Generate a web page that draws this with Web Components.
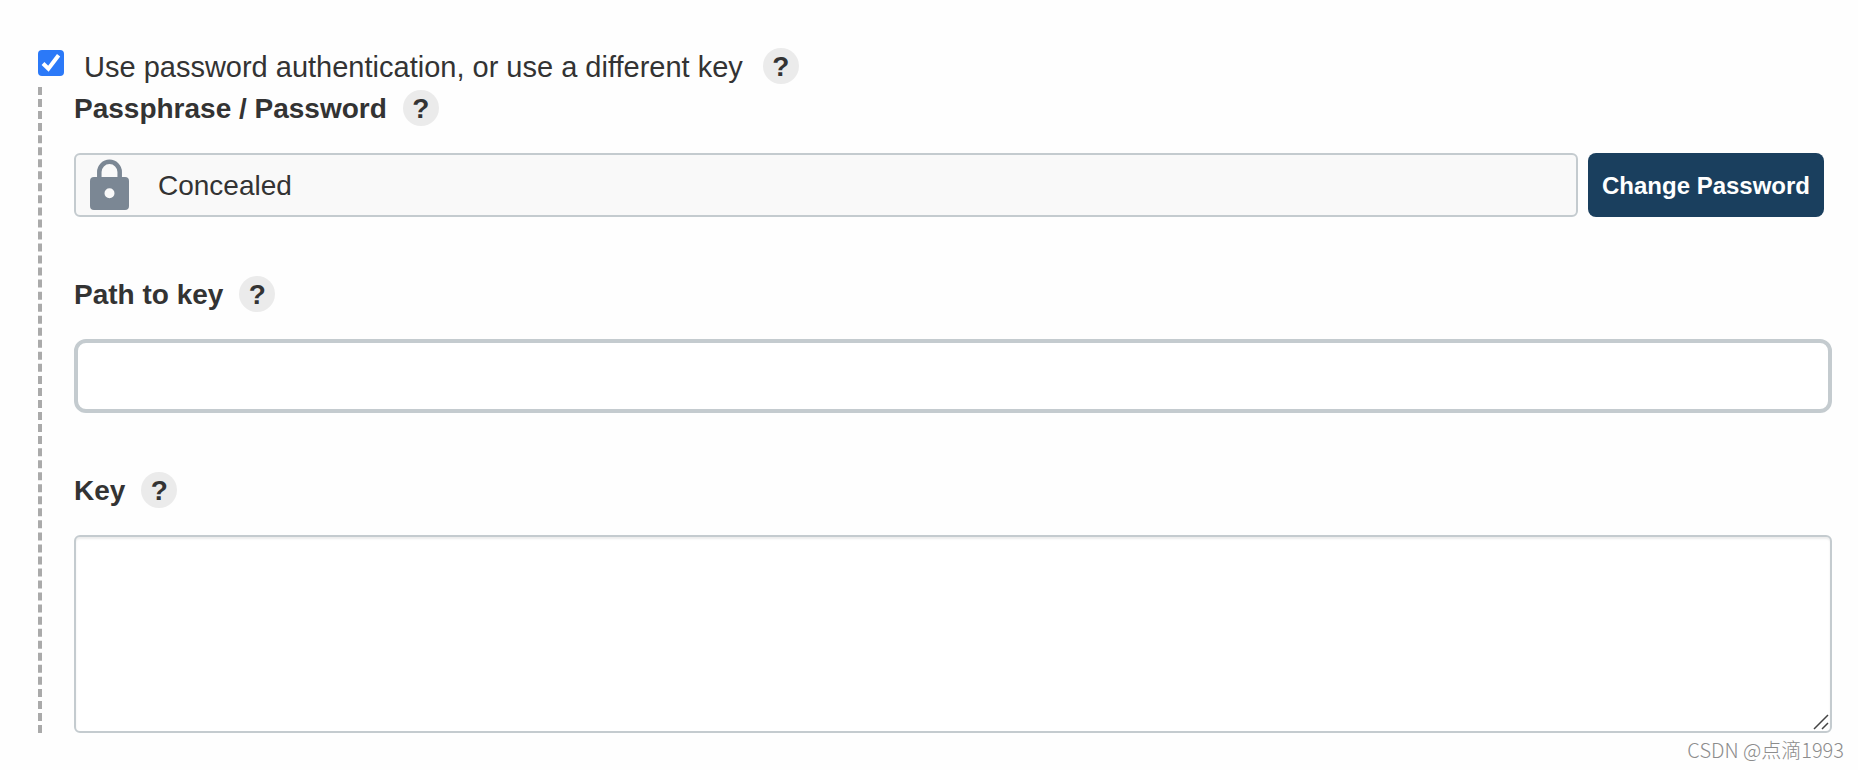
<!DOCTYPE html>
<html lang="en">
<head>
<meta charset="utf-8">
<meta name="viewport" content="width=device-width, initial-scale=1">
<title>Credentials</title>
<style>
  body { margin: 0; background: #fefefe; color: #333; font: 28px/38px "Liberation Sans", Arial, sans-serif; }
</style>
</head>
<body>
<credentials-form></credentials-form>
<script>
const define = (name, html, ready) => {
  const template = document.createElement('template');
  template.innerHTML = html;
  customElements.define(name, class extends HTMLElement {
    constructor() {
      super();
      this.attachShadow({ mode: 'open' }).append(template.content.cloneNode(true));
    }
    connectedCallback() { if (ready) ready(this, this.shadowRoot); }
  });
};

define('help-button', `
  <style>
    :host { display: block; flex: none; }
    button { display: block; width: 36px; height: 36px; margin: 0; padding: 0; border: 0; border-radius: 50%;
      background: #ebebeb; color: #333; font: bold 28px/38px "Liberation Sans", Arial, sans-serif; text-align: center; cursor: pointer; }
  </style>
  <button type="button">?</button>`,
  (host, root) => { root.querySelector('button').title = 'Help for ' + host.getAttribute('topic'); });

define('option-toggle', `
  <style>
    :host { display: flex; align-items: flex-start; height: 36px; }
    input { appearance: none; flex: none; width: 26px; height: 26px; margin: 2px 20px 0 0; border: 2px solid #767676; border-radius: 4px; background: #fff; }
    input:checked { border: 0; background: #2b79f8; }
    .box { position: relative; display: flex; }
    .box svg { position: absolute; left: 0; top: 2px; width: 26px; height: 26px; pointer-events: none; }
    input:not(:checked) + svg { display: none; }
    label { margin-right: 20px; font-size: 29px; }
  </style>
  <span class="box"><input type="checkbox" id="toggle" checked>
    <svg viewBox="0 0 26 26" aria-hidden="true"><path d="M5 13.5 10.4 18.8 20.6 5.2" fill="none" stroke="#fff" stroke-width="4"/></svg></span>
  <label for="toggle"><slot></slot></label>
  <help-button topic="authentication"></help-button>`);

const fieldStyle = `
    :host { display: block; }
    header { display: flex; gap: 16px; height: 36px; margin-bottom: 27px; font-weight: bold; }
    input, textarea { display: block; box-sizing: border-box; width: 100%; margin: 0; color: #333;
      font: 28px/38px "Liberation Sans", Arial, sans-serif; outline: 0; }`;

define('concealed-field', `
  <style>${fieldStyle}
    .row { display: flex; gap: 10px; padding-right: 8px; }
    .box { flex: 1; display: flex; align-items: center; box-sizing: border-box; height: 64px; padding-left: 14px;
      border: 2px solid #c4cbcf; border-radius: 6px; background: #f9f9f9; }
    svg { flex: none; width: 39px; height: 52px; margin-right: 29px; }
    input { flex: 1; min-width: 0; padding: 2px 0 0; border: 0; background: none; }
    button { flex: none; width: 236px; height: 64px; padding: 2px 0 0; border: 0; border-radius: 8px; background: #1a3f5e; color: #fff;
      font: bold 24px/32px "Liberation Sans", Arial, sans-serif; cursor: pointer; }
  </style>
  <header><label for="secret"><slot></slot></label><help-button topic="password"></help-button></header>
  <div class="row">
    <div class="box">
      <svg viewBox="0 0 39 52" aria-hidden="true">
        <path d="M9.300 21V13a10.200 10.200 0 0 1 20.400 0V21" fill="none" stroke="#7b8794" stroke-width="4.500"/>
        <path fill="#7b8794" fill-rule="evenodd" d="M4 18H35a4 4 0 0 1 4 4V47a4 4 0 0 1-4 4H4a4 4 0 0 1-4-4V22a4 4 0 0 1 4-4ZM19.500 29.200a5 5 0 1 0 0 10a5 5 0 1 0 0-10Z"/>
      </svg>
      <input id="secret" type="text" value="Concealed" readonly>
    </div>
    <button type="button">Change Password</button>
  </div>`);

define('text-field', `
  <style>${fieldStyle}
    input { height: 74px; padding: 0 14px; border: 4px solid #c4cbcf; border-radius: 12px; background: #fff; }
  </style>
  <header><label for="path"><slot></slot></label><help-button topic="path"></help-button></header>
  <input id="path" type="text">`);

define('key-area', `
  <style>${fieldStyle}
    .area { position: relative; }
    textarea { height: 198px; padding: 10px 14px; border: 2px solid #c4cbcf; border-radius: 6px; background: #fff;
      box-shadow: inset 0 2px 2px #ededed; resize: vertical; }
    textarea::-webkit-resizer { background: transparent; }
    svg { position: absolute; right: 3px; bottom: 3px; width: 16px; height: 16px; pointer-events: none; }
  </style>
  <header><label for="key"><slot></slot></label><help-button topic="key"></help-button></header>
  <div class="area"><textarea id="key"></textarea>
    <svg viewBox="0 0 16 16" aria-hidden="true"><path d="M1 15 15 1M9 15 15 9" fill="none" stroke="#444" stroke-width="1.500"/></svg></div>`);

define('field-group', `
  <style>
    :host { display: flex; flex-direction: column; gap: 59px; margin-top: 3px; padding: 3px 0 0 32px; border-left: 4px dashed #aaa; }
  </style>
  <slot></slot>`);

define('page-credit', `
  <style>
    :host { display: block; margin: 3px -12px 0 0; text-align: right; color: #8c8c8c;
      font: 300 20px/28px "Noto Sans CJK SC", sans-serif; }
  </style>
  <slot></slot>`);

define('credentials-form', `
  <style>
    :host { display: block; }
    form { padding: 48px 26px 6px 38px; }
  </style>
  <form>
    <option-toggle>Use password authentication, or use a different key</option-toggle>
    <field-group>
      <concealed-field>Passphrase / Password</concealed-field>
      <text-field>Path to key</text-field>
      <key-area>Key</key-area>
    </field-group>
    <page-credit>CSDN @点滴1993</page-credit>
  </form>`);
</script>
</body>
</html>
